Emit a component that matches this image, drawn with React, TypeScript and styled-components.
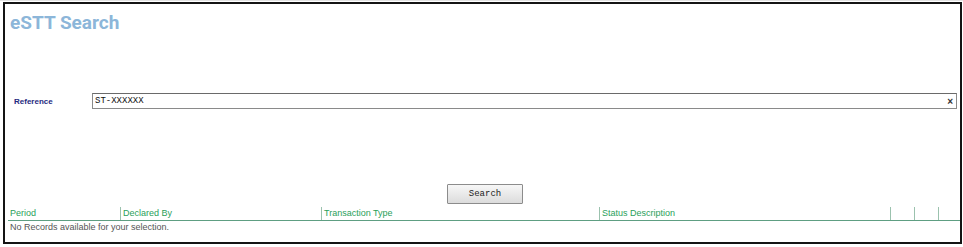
import React from "react";
import styled, { createGlobalStyle } from "styled-components";

const Global = createGlobalStyle`
  html, body { margin: 0; padding: 0; background: #ffffff; }
  body { font-family: "Liberation Sans", Arial, sans-serif; }
  #root { padding-top: 1px; border-top: 1px solid #e2e2e2; }
`;

const Frame = styled.div`
  box-sizing: border-box;
  margin-left: 3px;
  width: 959px;
  height: 242px;
  border: 2px solid #141414;
  display: flex;
  flex-direction: column;
`;

const Title = styled.h1`
  margin: 0;
  padding: 8px 0 0 5px;
  font-family: Roboto, "Liberation Sans", sans-serif;
  font-weight: 700;
  font-size: 19px;
  line-height: 22px;
  color: #8cb6d9;
`;

const FieldRow = styled.div`
  display: flex;
  align-items: center;
  margin-top: 59px;
  padding-left: 9px;
  height: 16px;
`;

const Label = styled.label`
  width: 78px;
  font-size: 8px;
  font-weight: 700;
  color: #1f2a80;
`;

const InputWrap = styled.div`
  position: relative;
  flex: 1;
  margin-right: 3px;
  height: 16px;
  display: flex;
`;

const TextInput = styled.input`
  display: block;
  box-sizing: border-box;
  flex: 1;
  margin: 0;
  height: 16px;
  border: 1px solid #8a8a8a;
  border-top-color: #6a6a6a;
  padding: 0 14px 0 2px;
  font-family: "Liberation Mono", "Courier New", monospace;
  font-size: 9px;
  color: #111;
  outline: none;
`;

const Clear = styled.span`
  position: absolute;
  right: 4px;
  top: 0;
  bottom: 0;
  display: flex;
  align-items: center;
  font-size: 10px;
  color: #333;
  font-weight: 700;
`;

const ButtonRow = styled.div`
  display: flex;
  justify-content: center;
  margin-top: 75px;
  padding-left: 5px;
`;

const Button = styled.button`
  width: 76px;
  height: 20px;
  border: 1px solid #8c8c8c;
  border-radius: 1px;
  background: linear-gradient(#f7f7f7, #dcdcdc);
  font-family: "Liberation Mono", "Courier New", monospace;
  font-size: 9px;
  color: #222;
  padding: 0;
`;

const Table = styled.div`
  margin: 3px 0 0 3px;
  width: 952px;
`;

const HeadRow = styled.div`
  display: grid;
  grid-template-columns: 112px 201px 278px 291px 24px 24px 22px;
  border-bottom: 1px solid #5e9e82;
  height: 13px;
`;

const HeadCell = styled.div<{ $divider?: boolean }>`
  border-left: ${(p) => (p.$divider ? "1px solid #9bc2ae" : "none")};
  padding-left: 2px;
  font-size: 9px;
  line-height: 13px;
  color: #2aa05a;
  white-space: nowrap;
  overflow: hidden;
`;

const EmptyRow = styled.div`
  padding: 1px 0 0 2px;
  font-size: 9px;
  line-height: 11px;
  color: #555;
`;

export default function App() {
  const cols = ["Period", "Declared By", "Transaction Type", "Status Description", "", "", ""];
  return (
    <>
      <Global />
      <Frame>
        <Title>eSTT Search</Title>
        <FieldRow>
          <Label>Reference</Label>
          <InputWrap>
            <TextInput defaultValue="ST-XXXXXX" />
            <Clear>×</Clear>
          </InputWrap>
        </FieldRow>
        <ButtonRow>
          <Button>Search</Button>
        </ButtonRow>
        <Table>
          <HeadRow>
            {cols.map((c, i) => (
              <HeadCell key={i} $divider={i > 0}>
                {c}
              </HeadCell>
            ))}
          </HeadRow>
          <EmptyRow>No Records available for your selection.</EmptyRow>
        </Table>
      </Frame>
    </>
  );
}
